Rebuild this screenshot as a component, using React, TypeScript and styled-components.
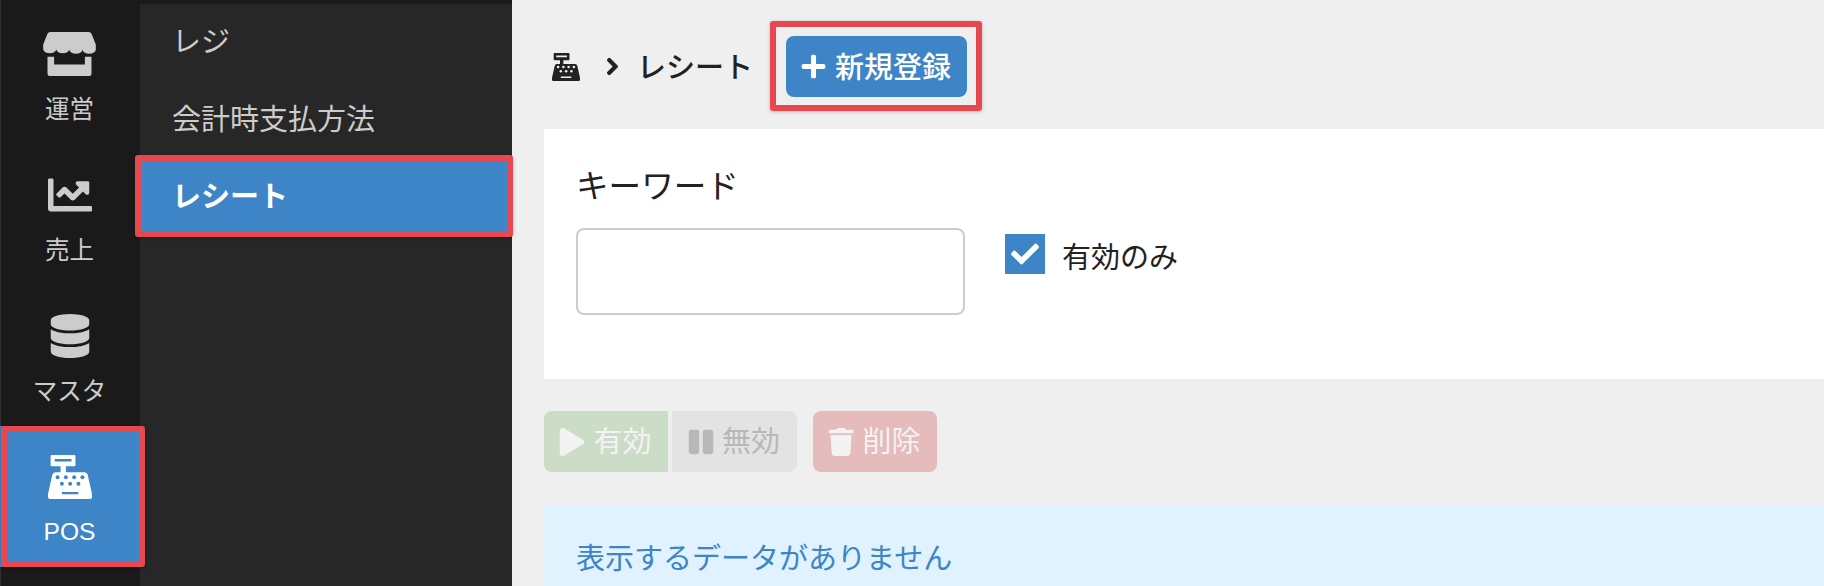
import React from 'react';
import styled, { createGlobalStyle } from 'styled-components';
import {
  FaChartLine,
  FaCheck,
  FaChevronRight,
  FaDatabase,
  FaPause,
  FaPlay,
  FaPlus,
  FaTrash,
} from 'react-icons/fa';

const blue = '#3d85c6';

const GlobalStyle = createGlobalStyle`
  html, body {
    margin: 0;
    height: 100%;
    overflow: hidden;
    background: #efefef;
    font-family: "Noto Sans CJK JP", "Liberation Sans", sans-serif;
  }
`;

const Page = styled.div`
  display: flex;
  width: 1824px;
  height: 586px;
  overflow: hidden;
`;

const Side = styled.div`
  display: flex;
  flex: none;
  width: 512px;
  background: #1a1a1a;
`;

const Rail = styled.nav`
  flex: none;
  width: 139px;
  padding-top: 3px;
  border-left: 1px solid #303030;
`;

const RailItem = styled.a<{ $active?: boolean }>`
  position: relative;
  z-index: 2;
  display: flex;
  flex-direction: column;
  align-items: center;
  height: 141px;
  margin-left: ${(p) => (p.$active ? -1 : 0)}px;
  padding: 29px ${(p) => (p.$active ? 1 : 2)}px 0 0;
  box-sizing: border-box;
  background: ${(p) => (p.$active ? blue : 'transparent')};
  color: ${(p) => (p.$active ? '#fff' : '#ccc')};
`;

const RailIcon = styled.div`
  display: flex;
  align-items: center;
  justify-content: center;
  height: 44px;
`;

const RailLabel = styled.div<{ $latin?: boolean }>`
  margin-top: ${(p) => (p.$latin ? 18 : 17)}px;
  font-size: ${(p) => (p.$latin ? 24.6 : 24.5)}px;
  line-height: 30px;
  font-family: ${(p) => (p.$latin ? '"Liberation Sans", sans-serif' : 'inherit')};
`;

const SubPanel = styled.nav`
  flex: 1;
  margin-top: 4px;
  background: #272727;
`;

const SubItem = styled.a<{ $active?: boolean; $first?: boolean }>`
  position: relative;
  display: flex;
  align-items: center;
  height: ${(p) => (p.$first ? 76 : 77)}px;
  padding: 0 0 ${(p) => (p.$first ? 7 : 4)}px 32px;
  box-sizing: border-box;
  background: ${(p) => (p.$active ? blue : 'transparent')};
  color: ${(p) => (p.$active ? '#fff' : '#ccc')};
  font-size: 29px;
  font-weight: ${(p) => (p.$active ? 700 : 400)};
`;

const Marker = styled.span<{ $inset: string }>`
  position: absolute;
  inset: ${(p) => p.$inset};
  border: 6px solid #e5484e;
  border-radius: 3px;
  box-shadow: 0 1px 4px rgba(0, 0, 0, 0.2);
  pointer-events: none;
`;

const Main = styled.main`
  flex: 1;
  min-width: 0;
  padding-left: 32px;
`;

const Header = styled.header`
  display: flex;
  align-items: center;
  height: 61px;
  padding: 36px 0 32px 8px;
  color: #222;
`;

const Crumb = styled.div`
  padding-bottom: 4px;
  font-size: 29px;
  font-weight: 500;
`;

const Chevron = styled(FaChevronRight)`
  margin: 0 15px 0 23px;
  stroke: currentColor;
  stroke-width: 30px;
`;

const AddButton = styled.button`
  position: relative;
  display: flex;
  align-items: center;
  gap: 8px;
  height: 61px;
  margin-left: 33px;
  padding: 0 16px 4px 14px;
  box-sizing: border-box;
  border: 0;
  border-radius: 8px;
  background: ${blue};
  color: #fff;
  font: inherit;
  font-size: 29px;
  font-weight: 500;

  svg {
    margin-top: 4px;
  }
`;

const Card = styled.section`
  height: 250px;
  padding: 33px 0 0 32px;
  box-sizing: border-box;
  background: #fff;
  color: #222;
`;

const FieldLabel = styled.div`
  font-size: 32.6px;
  line-height: 44px;
`;

const FieldRow = styled.div`
  display: flex;
  align-items: flex-start;
  gap: 40px;
  margin-top: 22px;
`;

const TextBox = styled.input`
  width: 389px;
  height: 87px;
  box-sizing: border-box;
  border: 2px solid #ccc;
  border-radius: 8px;
  background: #fff;
`;

const CheckRow = styled.label`
  display: flex;
  align-items: center;
  gap: 17px;
  margin-top: 6px;
  font-size: 29px;
`;

const CheckBox = styled.span`
  display: flex;
  align-items: center;
  justify-content: center;
  width: 40px;
  height: 40px;
  margin-top: -2px;
  background: ${blue};
  color: #fff;
`;

const Toolbar = styled.div`
  display: flex;
  height: 61px;
  margin-top: 32px;
`;

const tones = {
  green: { bg: '#cbddc6', fg: '#f3f3f3', radius: '8px 0 0 8px' },
  gray: { bg: '#e3e3e3', fg: '#b8b8b8', radius: '0 8px 8px 0' },
  red: { bg: '#e5bbbb', fg: '#f3f3f3', radius: '8px' },
};

const ActionButton = styled.button<{ $tone: keyof typeof tones }>`
  display: flex;
  align-items: center;
  justify-content: center;
  gap: 7px;
  width: 124px;
  height: 61px;
  padding: 0 2px 5px 0;
  box-sizing: border-box;
  border: 0;
  border-radius: ${(p) => tones[p.$tone].radius};
  background: ${(p) => tones[p.$tone].bg};
  color: ${(p) => tones[p.$tone].fg};
  font: inherit;
  font-size: 29px;

  svg {
    margin-top: 5px;
  }
  &:nth-child(2) {
    width: 125px;
    margin-left: 4px;
  }
  &:nth-child(3) {
    margin-left: 16px;
  }
`;

const Notice = styled.div`
  height: 200px;
  margin-top: 33px;
  padding: 29px 0 0 32px;
  box-sizing: border-box;
  background: #e0f2fe;
  color: ${blue};
  font-size: 29px;
  line-height: 44px;
`;

const StoreIcon = () => (
  <svg width="53" height="44" viewBox="0 0 159 133" fill="currentColor">
    <path d="M21 0H138Q143 0 146 5L159 38V53a20 13 0 0 1-40 0a20 13 0 0 1-40 0a20 13 0 0 1-39.500 0a20 13 0 0 1-39.500 0V38L13 5Q16 0 21 0Z" />
    <path d="M13 75H33V98H126V75H146V126Q146 133 139 133H20Q13 133 13 126Z" />
  </svg>
);

const RegisterIcon = ({ size }: { size: number }) => (
  <svg width={size} height={size} viewBox="0 0 133 133" fill="currentColor">
    <path
      fillRule="evenodd"
      d="M12 0H79Q83 0 83 4V30Q83 34 79 34H54V52H110Q118 52 120 60L133 118V127Q133 133 127 133H6Q0 133 0 127V118L13 60Q15 52 23 52H38V34H12Q8 34 8 30V4Q8 0 12 0ZM20 12V20H71V12ZM42 112V119H92V112Z"
    />
    <g fill="var(--dot)">
      <circle cx="29" cy="67" r="6" />
      <circle cx="54" cy="67" r="6" />
      <circle cx="79" cy="67" r="6" />
      <circle cx="104" cy="67" r="6" />
      <circle cx="42" cy="87" r="6" />
      <circle cx="67" cy="87" r="6" />
      <circle cx="92" cy="87" r="6" />
    </g>
  </svg>
);

const DotsBlue = styled.span`
  display: flex;
  --dot: ${blue};
`;

const DotsLight = styled.span`
  display: flex;
  --dot: #efefef;
`;

const App = () => {
  return (
    <Page>
      <GlobalStyle />
      <Side>
        <Rail>
          <RailItem>
            <RailIcon>
              <StoreIcon />
            </RailIcon>
            <RailLabel>運営</RailLabel>
          </RailItem>
          <RailItem>
            <RailIcon>
              <FaChartLine size={44} />
            </RailIcon>
            <RailLabel>売上</RailLabel>
          </RailItem>
          <RailItem>
            <RailIcon>
              <FaDatabase size={44} />
            </RailIcon>
            <RailLabel>マスタ</RailLabel>
          </RailItem>
          <RailItem $active>
            <RailIcon>
              <DotsBlue>
                <RegisterIcon size={44} />
              </DotsBlue>
            </RailIcon>
            <RailLabel $latin>POS</RailLabel>
            <Marker $inset="0 -5px 0 1px" />
          </RailItem>
        </Rail>
        <SubPanel>
          <SubItem $first>レジ</SubItem>
          <SubItem>会計時支払方法</SubItem>
          <SubItem $active>
            レシート
            <Marker $inset="-2px -1px -3px -5px" />
          </SubItem>
        </SubPanel>
      </Side>
      <Main>
        <Header>
          <DotsLight>
            <RegisterIcon size={28} />
          </DotsLight>
          <Chevron size={19} />
          <Crumb>レシート</Crumb>
          <AddButton>
            <FaPlus size={27} />
            新規登録
            <Marker $inset="-15px -15px -14px -16px" />
          </AddButton>
        </Header>
        <Card>
          <FieldLabel>キーワード</FieldLabel>
          <FieldRow>
            <TextBox />
            <CheckRow>
              <CheckBox>
                <FaCheck size={28} />
              </CheckBox>
              有効のみ
            </CheckRow>
          </FieldRow>
        </Card>
        <Toolbar>
          <ActionButton $tone="green">
            <FaPlay size={28} />
            有効
          </ActionButton>
          <ActionButton $tone="gray">
            <FaPause size={28} />
            無効
          </ActionButton>
          <ActionButton $tone="red">
            <FaTrash size={28} />
            削除
          </ActionButton>
        </Toolbar>
        <Notice>表示するデータがありません</Notice>
      </Main>
    </Page>
  );
};

export default App;
